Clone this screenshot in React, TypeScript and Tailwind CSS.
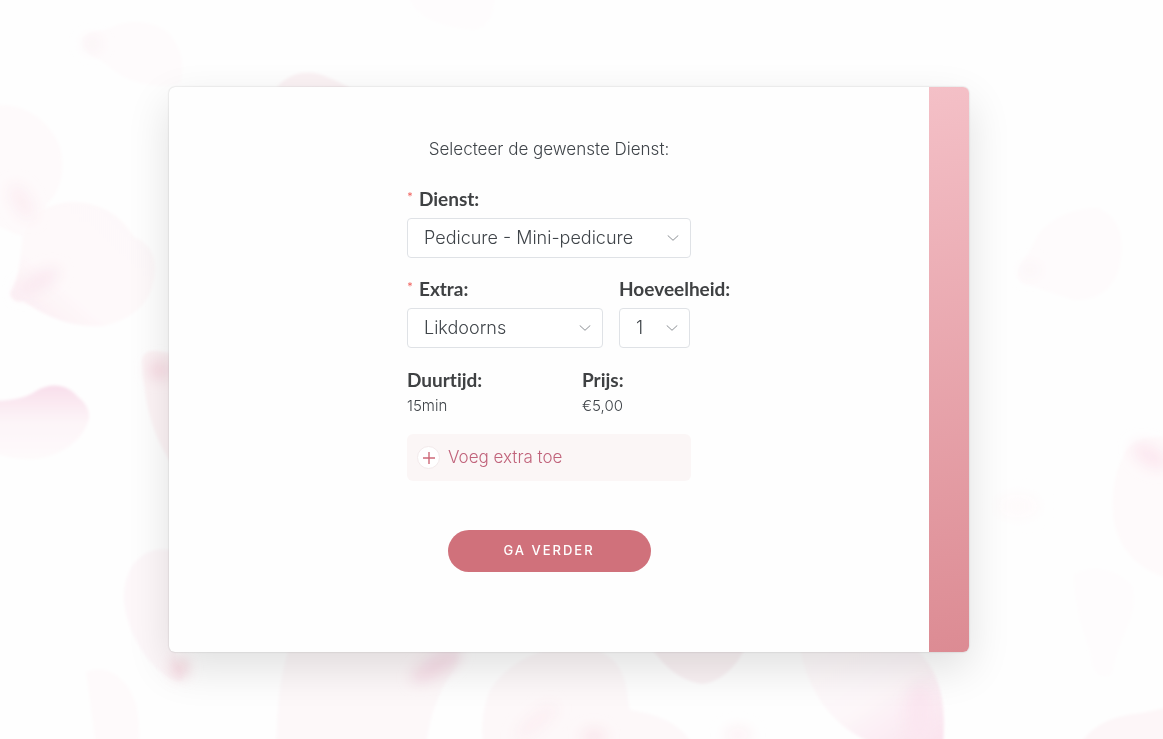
import { ReactNode, SelectHTMLAttributes, useState } from 'react';

const services = ['Pedicure - Mini-pedicure', 'Pedicure - Medisch', 'Manicure'];
const extras = ['Likdoorns', 'Eelt', 'Nagellak'];
const amounts = ['1', '2', '3'];

function Petals() {
  return (
    <svg
      className="absolute inset-0 -z-10 h-full w-full"
      viewBox="0 0 1163 739"
      preserveAspectRatio="xMidYMid slice"
      aria-hidden="true"
    >
      <defs>
        <linearGradient id="petalDown" x1="0" y1="0" x2="0" y2="1">
          <stop offset="0" stopColor="#f8deeb" />
          <stop offset="0.5" stopColor="#fdf5f8" />
          <stop offset="1" stopColor="#fefafb" />
        </linearGradient>
        <linearGradient id="petalTip" x1="0" y1="1" x2="1" y2="0">
          <stop offset="0" stopColor="#fbebf1" />
          <stop offset="0.35" stopColor="#fef9fa" />
          <stop offset="1" stopColor="#fdf8f9" />
        </linearGradient>
        <linearGradient id="petalRight" x1="0" y1="0" x2="1" y2="1">
          <stop offset="0" stopColor="#fefafb" />
          <stop offset="0.5" stopColor="#fdf7f9" />
          <stop offset="1" stopColor="#fae2ee" />
        </linearGradient>
        <filter id="soft" x="-20%" y="-20%" width="140%" height="140%">
          <feGaussianBlur stdDeviation="1.5" />
        </filter>
        <filter id="hazy" x="-50%" y="-50%" width="200%" height="200%">
          <feGaussianBlur stdDeviation="7" />
        </filter>
      </defs>
      <g filter="url(#soft)">
        <path d="M83 38c8-8 20-6 31-12 20-8 50-4 60 14 10 16 10 30 6 44-30 6-58-4-74-20-12-8-26-12-23-26z" fill="#fefbfc" />
        <path d="M-6 105c32-2 56 16 66 42 6 22 1 44-12 56-12 20-10 34-22 34-12-2-20-8-32-12z" fill="#fefafb" />
        <path d="M10 293c8-12 10-26 12-54 6-26 30-40 62-36 26 4 40 18 50 34 20 8 24 26 19 46-4 22-24 38-50 43-32 2-58-10-80-25-7 2-12-2-13-8z" fill="url(#petalTip)" />
        <path d="M-6 401c16 0 32-3 42-10 14-8 30-8 42 6 8 6 12 14 11 22-6 20-24 36-54 40-14 1-30-2-41-6z" fill="url(#petalDown)" />
        <path d="M277 87c14-16 34-18 50-10 10 4 18 8 24 12z" fill="#fbf2f4" />
        <path d="M408-4c10 24 34 30 66 34 16-4 20-16 20-34z" fill="#fefcfd" />
        <path d="M142 360c2-12 14-10 30-6v110c-14-20-24-44-28-80z" fill="#fdf4f6" />
        <path d="M132 566c12-16 28-20 44-14v110c8 10 12 22-2 18-24-10-46-44-50-78-1-12 2-26 8-36z" fill="#fdf7f9" />
        <path d="M86 672c18-8 34 2 44 18 8 14 10 32 9 56H96z" fill="#fefafb" />
        <path d="M290 646h170c2 26-24 30-34 100H276c2-24 0-60 14-100z" fill="#fdf8f9" />
        <path d="M490 690c28-44 90-52 118-34 20 14 18 36 22 54 26 4 50 12 64 36H484c-4-24 0-40 6-56z" fill="#fdf8f9" />
        <path d="M650 646h96c-10 22-26 36-44 38-24-4-38-18-52-38z" fill="#faf2f4" />
        <path d="M800 646h112c28 22 34 54 31 100h-60c-46-12-76-52-83-100z" fill="url(#petalRight)" />
        <path d="M1018 272c4-14 12-18 18-34 12-20 38-30 62-30 24 10 28 34 20 64-10 24-26 28-44 28-20-6-34-12-52-16-4-4-5-8-4-12z" fill="#fefbfc" />
        <path d="M1169 436c-24 0-40 6-46 20-10 20-12 46-9 66 6 30 26 48 55 57z" fill="#fefafb" />
        <path d="M1074 574c20-10 44-4 58 12 8 30-14 50-20 88-16 8-20-6-22-24-10-24-16-52-16-76z" fill="#fefcfd" />
        <path d="M1080 745c14-24 40-30 62-32 10-2 18-4 27-6v38z" fill="#fdf6f8" />
      </g>
      <g filter="url(#hazy)">
        <ellipse cx="22" cy="202" rx="9" ry="20" transform="rotate(-30 22 202)" fill="#fceef3" />
        <ellipse cx="92" cy="44" rx="8" ry="7" fill="#fbf1f4" />
        <ellipse cx="38" cy="282" rx="24" ry="8" transform="rotate(-30 38 282)" fill="#fae8f0" />
        <ellipse cx="160" cy="370" rx="12" ry="10" fill="#f8dce4" />
        <ellipse cx="180" cy="668" rx="8" ry="10" fill="#f6d3dd" />
        <ellipse cx="436" cy="666" rx="28" ry="10" transform="rotate(-30 436 666)" fill="#f8dfe9" />
        <ellipse cx="536" cy="722" rx="26" ry="8" transform="rotate(-40 536 722)" fill="#fceff3" />
        <ellipse cx="594" cy="737" rx="12" ry="8" fill="#fae6ec" />
        <ellipse cx="738" cy="735" rx="14" ry="8" fill="#fdf2f5" />
        <ellipse cx="1150" cy="456" rx="20" ry="10" transform="rotate(30 1150 456)" fill="#fce8f0" />
        <ellipse cx="1030" cy="270" rx="10" ry="6" fill="#fcf5f7" />
        <ellipse cx="1018" cy="506" rx="22" ry="12" fill="#fefafb" />
        <ellipse cx="920" cy="715" rx="14" ry="30" fill="#fbe6f0" />
      </g>
    </svg>
  );
}

function Label({ htmlFor, required, children }: { htmlFor: string; required?: boolean; children: ReactNode }) {
  return (
    <label
      htmlFor={htmlFor}
      className="mb-[7px] flex items-start gap-1.5 font-[Lato,sans-serif] text-[19px] leading-6 font-bold whitespace-nowrap text-[#3f4143]"
    >
      {required && <span className="text-sm leading-5 font-normal text-[#f0605c]">*</span>}
      {children}
    </label>
  );
}

function Select({ options, ...props }: SelectHTMLAttributes<HTMLSelectElement> & { options: string[] }) {
  return (
    <div className="relative">
      <select
        {...props}
        className="h-10 w-full appearance-none rounded border border-[#dfe2e6] bg-white px-4 text-lg font-light text-[#3f4449] outline-none focus:border-[#d0717b]"
      >
        {options.map((option) => (
          <option key={option}>{option}</option>
        ))}
      </select>
      <svg
        className="pointer-events-none absolute top-1/2 right-3 h-1.5 w-3 -translate-y-1/2"
        viewBox="0 0 12 6"
        fill="none"
        stroke="#8c9095"
        aria-hidden="true"
      >
        <path d="M0.7 0.4 6 5.3 11.3 0.4" />
      </svg>
    </div>
  );
}

function Detail({ name, value }: { name: string; value: string }) {
  return (
    <div>
      <dt className="font-[Lato,sans-serif] text-[19px] leading-6 font-bold text-[#3f4143] [font-variant-ligatures:none]">
        {name}
      </dt>
      <dd className="mt-0.5 text-[15px] leading-6 font-light">{value}</dd>
    </div>
  );
}

export default function App() {
  const [service, setService] = useState(services[0]);
  const [extra, setExtra] = useState(extras[0]);
  const [amount, setAmount] = useState(amounts[0]);

  return (
    <main className="relative isolate flex min-h-screen items-center justify-center overflow-hidden bg-[#fefefe] pr-[25px] font-[Inter,sans-serif] text-[#3f4449]">
      <Petals />
      <div className="flex w-full max-w-[800px] overflow-hidden rounded-md bg-[#fefefe] shadow-[0_0_2px_rgba(0,0,0,0.22),0_16px_44px_rgba(0,0,0,0.12)]">
        <form className="flex flex-1 flex-col items-center pt-[50px] pb-20" onSubmit={(e) => e.preventDefault()}>
          <div className="w-[284px]">
            <h1 className="mb-[26px] text-center text-[17px] leading-6 font-light">Selecteer de gewenste Dienst:</h1>

            <Label htmlFor="service" required>Dienst:</Label>
            <Select id="service" options={services} value={service} onChange={(e) => setService(e.target.value)} />

            <div className="mt-[19px] grid grid-cols-[196px_71px] gap-x-4">
              <div>
                <Label htmlFor="extra" required>Extra:</Label>
                <Select id="extra" options={extras} value={extra} onChange={(e) => setExtra(e.target.value)} />
              </div>
              <div>
                <Label htmlFor="amount">Hoeveelheid:</Label>
                <Select id="amount" options={amounts} value={amount} onChange={(e) => setAmount(e.target.value)} />
              </div>
            </div>

            <dl className="mt-5 grid grid-cols-[175px_1fr]">
              <Detail name="Duurtijd:" value="15min" />
              <Detail name="Prijs:" value="€5,00" />
            </dl>

            <button
              type="button"
              className="mt-4 flex h-[47px] w-full items-center gap-2 rounded-md bg-[#fbf6f6] px-2.5 text-[17px] font-light text-[#c0627a]"
            >
              <span className="flex size-[23px] items-center justify-center rounded-full border border-[#f3eaeb] bg-white">
                <svg className="size-3" viewBox="0 0 12 12" stroke="#cd6878" strokeWidth="1.4" aria-hidden="true">
                  <path d="M6 0v12M0 6h12" />
                </svg>
              </span>
              Voeg extra toe
            </button>
          </div>

          <button
            type="submit"
            className="mt-[49px] h-[42px] w-[203px] rounded-full bg-[#d0717b] text-[13px] font-medium tracking-[2px] text-white"
          >
            GA VERDER
          </button>
        </form>
        <div className="w-10 bg-linear-[170deg] from-[#f4c0c7] to-[#dc8b93]" />
      </div>
    </main>
  );
}
